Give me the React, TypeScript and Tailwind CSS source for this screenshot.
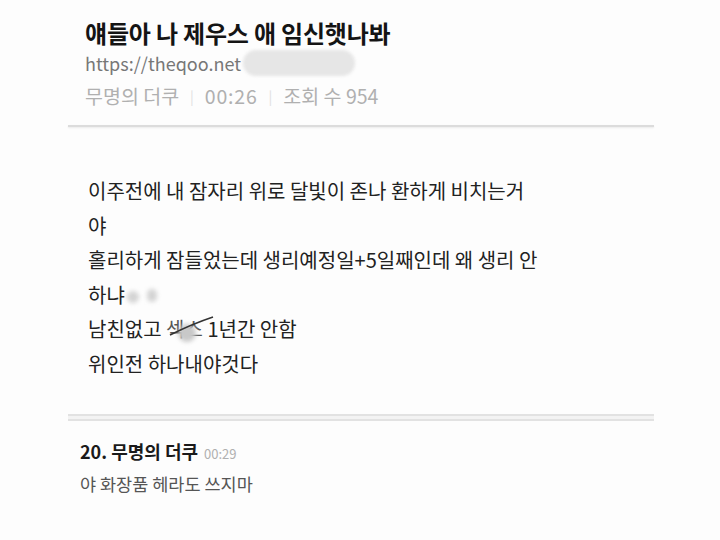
import React from "react";

const font = { fontFamily: '"Noto Sans CJK KR", "Noto Sans", sans-serif' };

function Blob({ className }: { className: string }) {
  return <span className={`inline-block rounded-full bg-[#d4d4d4] blur-[2px] ${className}`} />;
}

export default function App() {
  return (
    <div className="w-[720px] h-[540px] bg-[#fdfdfd] overflow-hidden" style={font}>
      <div className="ml-[68px] w-[586px]">
        {/* post header */}
        <div className="pl-[17px] pt-[14px]">
          <h1 className="text-[24px] leading-[38px] font-bold text-[#141414] tracking-[-0.2px]">
            얘들아 나 제우스 애 임신햇나봐
          </h1>
          <div className="flex items-center h-[22px] text-[18px] text-[#777]">
            <span>https://theqoo.net</span>
            <span className="ml-[2px] w-[112px] h-[26px] rounded-full bg-[#e6e6e6] blur-[1.5px]" />
          </div>
          <div className="flex items-center mt-[6px] h-[32px] text-[19.5px] text-[#b0b0b0]">
            <span>무명의 더쿠</span>
            <span className="mx-[11px] text-[14px] text-[#e0e0e0]">|</span>
            <span className="tracking-[0.8px]">00:26</span>
            <span className="mx-[11px] text-[14px] text-[#e0e0e0]">|</span>
            <span>조회 수 954</span>
          </div>
        </div>

        <div className="mt-[13px] h-[2px] bg-[#dcdcdc] shadow-[0_1px_2px_rgba(0,0,0,0.08)]" />

        {/* post body */}
        <div className="pl-[20px] pt-[47px] text-[20px] leading-[34.5px] text-[#222]">
          <p>이주전에 내 잠자리 위로 달빛이 존나 환하게 비치는거</p>
          <p>야</p>
          <p>홀리하게 잠들었는데 생리예정일+5일째인데 왜 생리 안</p>
          <p className="flex items-center">
            <span>하냐</span>
            <Blob className="ml-[2px] w-[12px] h-[12px] mt-[4px]" />
            <Blob className="ml-[8px] w-[10px] h-[13px] mt-[2px]" />
          </p>
          <p className="flex items-center">
            <span>남친없고&nbsp;</span>
            <span className="relative inline-block">
              <span className="text-[#555]">섹스</span>
              <span className="absolute left-[12px] top-[12px] w-[18px] h-[18px] rounded-full bg-[#c8c8c8] blur-[2px]" />
              <svg className="absolute left-[2px] top-[3px]" width="46" height="24" viewBox="0 0 46 24">
                <path d="M2 20 C 16 13, 30 7, 45 2" stroke="#333" strokeWidth="1.6" fill="none" />
              </svg>
            </span>
            <span>&nbsp;1년간 안함</span>
          </p>
          <p>위인전 하나내야것다</p>
        </div>

        <div className="mt-[33px] h-[7px] border-y-2 border-[#e2e2e2] bg-[#f3f3f3]" />

        {/* comment */}
        <div className="pl-[12px] pt-[17px]">
          <div className="flex items-baseline">
            <span className="text-[18px] font-bold text-[#1a1a1a]">20. 무명의 더쿠</span>
            <span className="ml-[6px] text-[13px] text-[#b0b0b0]">00:29</span>
          </div>
          <p className="mt-[6px] text-[17.5px] text-[#555]">야 화장품 헤라도 쓰지마</p>
        </div>
      </div>
    </div>
  );
}
